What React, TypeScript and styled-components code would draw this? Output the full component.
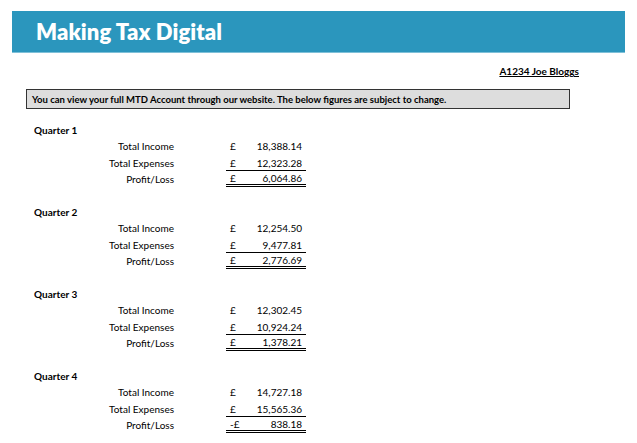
import React from "react";
import styled, { createGlobalStyle } from "styled-components";

const Global = createGlobalStyle`
  body { margin: 0; background: #fff; font-family: Lato, "Open Sans", sans-serif; color: #000; }
`;
const Page = styled.div`padding: 11px 12px 0 12px;`;
const Banner = styled.div`
  height: 42px; background: #2b96bd; border-bottom: 1px solid #7fc0d8;
  display: flex; align-items: center; padding-left: 24px; box-sizing: border-box;
`;
const Title = styled.h1`margin: 0; color: #fff; font: 800 22px Lato, sans-serif; letter-spacing: 0.1px;`;
const NameRow = styled.div`display: flex; justify-content: flex-end; padding-right: 46px; margin-top: 11px; height: 14px; align-items: center;`;
const Name = styled.span`font-size: 10px; font-weight: 700; text-decoration: underline;`;
const Notice = styled.div`
  margin: 11px 0 0 14px; width: 544px; height: 20px; box-sizing: border-box;
  background: #dddddd; border: 1.5px solid #333; font-size: 9.5px; font-weight: 700;
  display: flex; align-items: center; padding-left: 5px;
`;
const Quarters = styled.div`padding: 14px 0 0 22px;`;
const Block = styled.section`height: 82px;`;
const Heading = styled.div`height: 14px; line-height: 14px; font-size: 10px; font-weight: 700;`;
const Row = styled.div<{ $gap?: number; $h: number }>`
  display: grid; grid-template-columns: 140px 80px; column-gap: 52px;
  height: ${p => p.$h}px; margin-top: ${p => p.$gap ?? 0}px; font-size: 10px;
`;
const Label = styled.div`text-align: right; display: flex; align-items: center; justify-content: flex-end;`;
const Amount = styled.div<{ $line?: "single" | "double" }>`
  display: flex; align-items: center; justify-content: space-between; padding: 0 4px 0 4px;
  box-sizing: border-box;
  border-bottom: ${p => p.$line === "single" ? "1px solid #000" : p.$line === "double" ? "3px double #000" : "none"};
`;

const data = [
  ["Quarter 1", "18,388.14", "12,323.28", "6,064.86", "£"],
  ["Quarter 2", "12,254.50", "9,477.81", "2,776.69", "£"],
  ["Quarter 3", "12,302.45", "10,924.24", "1,378.21", "£"],
  ["Quarter 4", "14,727.18", "15,565.36", "838.18", "-£"],
];

export default function App() {
  return (
    <Page>
      <Global />
      <Banner><Title>Making Tax Digital</Title></Banner>
      <NameRow><Name>A1234 Joe Bloggs</Name></NameRow>
      <Notice>You can view your full MTD Account through our website. The below figures are subject to change.</Notice>
      <Quarters>
        {data.map(([q, inc, exp, pl, cur]) => (
          <Block key={q}>
            <Heading>{q}</Heading>
            <Row $h={16} $gap={1}><Label>Total Income</Label><Amount><span>£</span><span>{inc}</span></Amount></Row>
            <Row $h={16} $gap={1}><Label>Total Expenses</Label><Amount $line="single"><span>£</span><span>{exp}</span></Amount></Row>
            <Row $h={16}><Label>Profit/Loss</Label><Amount $line="double"><span>{cur}</span><span>{pl}</span></Amount></Row>
          </Block>
        ))}
      </Quarters>
    </Page>
  );
}
